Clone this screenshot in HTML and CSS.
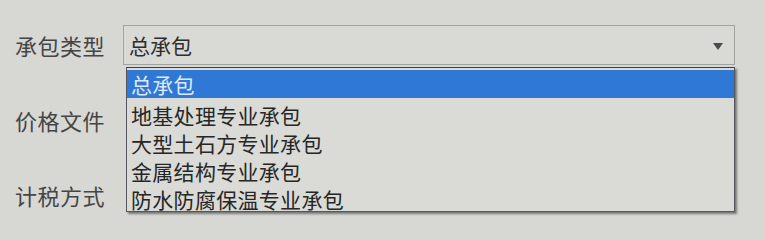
FILE: index.html
```html
<!DOCTYPE html>
<html lang="zh-CN">
<head>
<meta charset="utf-8">
<link rel="stylesheet" href="styles.css">
</head>
<body>
<div class="form">
  <div class="row">
    <div class="label">承包类型</div>
    <div class="select">
      <span class="value">总承包</span>
      <span class="arrow"></span>
      <ul class="dropdown">
        <li class="item selected">总承包</li>
        <li class="item">地基处理专业承包</li>
        <li class="item">大型土石方专业承包</li>
        <li class="item">金属结构专业承包</li>
        <li class="item">防水防腐保温专业承包</li>
      </ul>
    </div>
  </div>
  <div class="row">
    <div class="label">价格文件</div>
    <div class="field"></div>
  </div>
  <div class="row">
    <div class="label">计税方式</div>
    <div class="field"></div>
  </div>
</div>
</body>
</html>
```
FILE: styles.css
```css
html, body {
  margin: 0;
  padding: 0;
  background: #d7d7d3;
  overflow: hidden;
}
body {
  width: 765px;
  height: 234px;
  font-family: "Noto Sans CJK SC", "Microsoft YaHei", sans-serif;
  color: #3c3c3c;
}
.form {
  padding-top: 25px;
  display: flex;
  flex-direction: column;
  gap: 35px;
}
.row {
  display: grid;
  grid-template-columns: 123px 612px;
  height: 40px;
  align-items: center;
}
.label {
  padding-left: 15px;
  font-size: 22px;
  line-height: 40px;
  color: #454545;
  letter-spacing: 0.5px;
}
.select {
  position: relative;
  height: 40px;
  box-sizing: border-box;
  border: 1px solid #a2a29e;
  display: flex;
  align-items: center;
  padding-left: 5px;
  background: #d9d9d5;
}
.value {
  font-size: 21px;
  color: #2e2e2e;
  flex: 1;
}
.arrow {
  width: 0;
  height: 0;
  border-left: 5px solid transparent;
  border-right: 5px solid transparent;
  border-top: 7px solid #4a4a4a;
  margin-right: 11px;
  margin-top: 2px;
}
.field {
  height: 40px;
}
.dropdown {
  position: absolute;
  top: 41px;
  left: 2px;
  width: 609px;
  height: 145px;
  box-sizing: border-box;
  margin: 0;
  padding: 2px 0 0 0;
  list-style: none;
  background: #dadad6;
  border: 1px solid #55575c;
  border-top: 1px solid #3e4046;
  box-shadow: 2px 2px 2px rgba(40, 40, 40, 0.55);
  z-index: 2;
}
.item {
  height: 28px;
  line-height: 28px;
  padding-left: 4px;
  font-size: 21px;
  color: #262626;
  letter-spacing: 0.3px;
}
.item.selected {
  background: #2f78d6;
  color: #dfe9f6;
  margin-bottom: 3px;
}
```
